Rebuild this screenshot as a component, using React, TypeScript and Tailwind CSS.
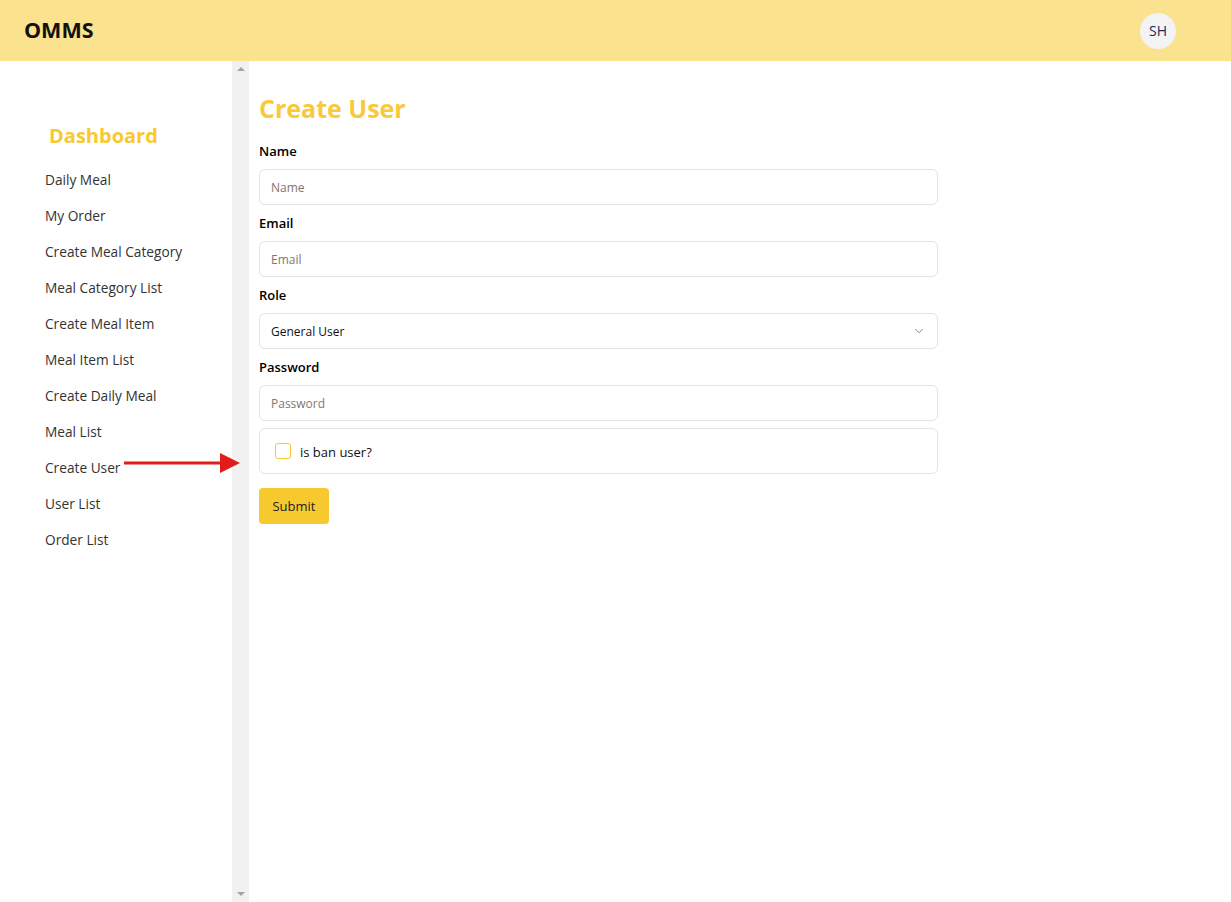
import { ChevronDown } from "lucide-react"

const menu = [
  "Daily Meal",
  "My Order",
  "Create Meal Category",
  "Meal Category List",
  "Create Meal Item",
  "Meal Item List",
  "Create Daily Meal",
  "Meal List",
  "Create User",
  "User List",
  "Order List",
]

function Field({ label, placeholder }: { label: string; placeholder: string }) {
  return (
    <div>
      <label className="block h-[18px] leading-[18px] text-[13px] font-semibold text-black mb-[9px]">{label}</label>
      <input
        placeholder={placeholder}
        className="w-full h-9 px-[11px] text-[12px] border border-[#e3e3e3] rounded-md outline-none placeholder:text-[#7f7770] mb-[9px]"
      />
    </div>
  )
}

function App() {
  return (
    <div className="h-[902px] flex flex-col bg-white overflow-hidden font-['Open_Sans',sans-serif] relative">
      <header className="h-[61px] shrink-0 bg-[#FBE28E] flex items-center justify-between pl-6 pr-[55px]">
        <h1 className="text-[21.5px] font-bold text-[#111]">OMMS</h1>
        <div className="w-9 h-9 rounded-full bg-[#f3f3f3] flex items-center justify-center text-[14px] text-[#1f2a5a]">SH</div>
      </header>

      <div className="flex flex-1 min-h-0">
        <aside className="w-[232px] shrink-0 pt-[60px]">
          <h2 className="pl-[49px] text-[20px] leading-[30px] font-bold text-[#F8C92F] mb-[11px]">Dashboard</h2>
          <ul>
            {menu.map((m) => (
              <li key={m} className="h-9 flex items-center pl-[45px] text-[13.7px] text-[#333]">{m}</li>
            ))}
          </ul>
        </aside>

        <div className="w-[17px] shrink-0 bg-[#f1f1f1] flex flex-col justify-between items-center py-[6px]">
          <div className="w-0 h-0 border-l-4 border-r-4 border-b-4 border-l-transparent border-r-transparent border-b-[#a3a3a3]" />
          <div className="w-0 h-0 border-l-4 border-r-4 border-t-4 border-l-transparent border-r-transparent border-t-[#a3a3a3]" />
        </div>

        <main className="pl-[10px] pt-[30px] w-[689px]">
          <h1 className="text-[25px] leading-[34px] font-bold text-[#F8CA3A] mb-[17px]">Create User</h1>
          <Field label="Name" placeholder="Name" />
          <Field label="Email" placeholder="Email" />
          <div>
            <label className="block h-[18px] leading-[18px] text-[13px] font-semibold text-black mb-[9px]">Role</label>
            <div className="w-full h-9 px-[11px] border border-[#e3e3e3] rounded-md flex items-center justify-between mb-[9px]">
              <span className="text-[12px] text-[#111] pt-[2px]">General User</span>
              <ChevronDown className="w-[14px] h-[14px] text-[#777]" strokeWidth={1.5} />
            </div>
          </div>
          <div>
            <label className="block h-[18px] leading-[18px] text-[13px] font-semibold text-black mb-[9px]">Password</label>
            <input
              type="password"
              placeholder="Password"
              className="w-full h-9 px-[11px] text-[12px] border border-[#e3e3e3] rounded-md outline-none placeholder:text-[#7f7770]"
            />
          </div>
          <div className="mt-[7px] h-[46px] border border-[#e3e3e3] rounded-md flex items-center pl-[15px] gap-[9px] pt-[2px]">
            <span className="w-4 h-4 border border-[#F6CA2F] rounded-[3px] -mt-[2px]" />
            <span className="text-[13px] text-[#111] pt-[2px]">is ban user?</span>
          </div>
          <button className="mt-[14px] h-9 w-[70px] bg-[#F6CA2F] rounded-[4px] text-[13px] text-[#222] pt-[2px]">Submit</button>
        </main>
      </div>

      <svg className="absolute left-[124px] top-[453px]" width="118" height="20" viewBox="0 0 118 20">
        <line x1="0" y1="10" x2="98" y2="10" stroke="#E21B1B" strokeWidth="3" />
        <polygon points="96,0 116,10 96,20" fill="#E21B1B" />
      </svg>
    </div>
  )
}

export default App
